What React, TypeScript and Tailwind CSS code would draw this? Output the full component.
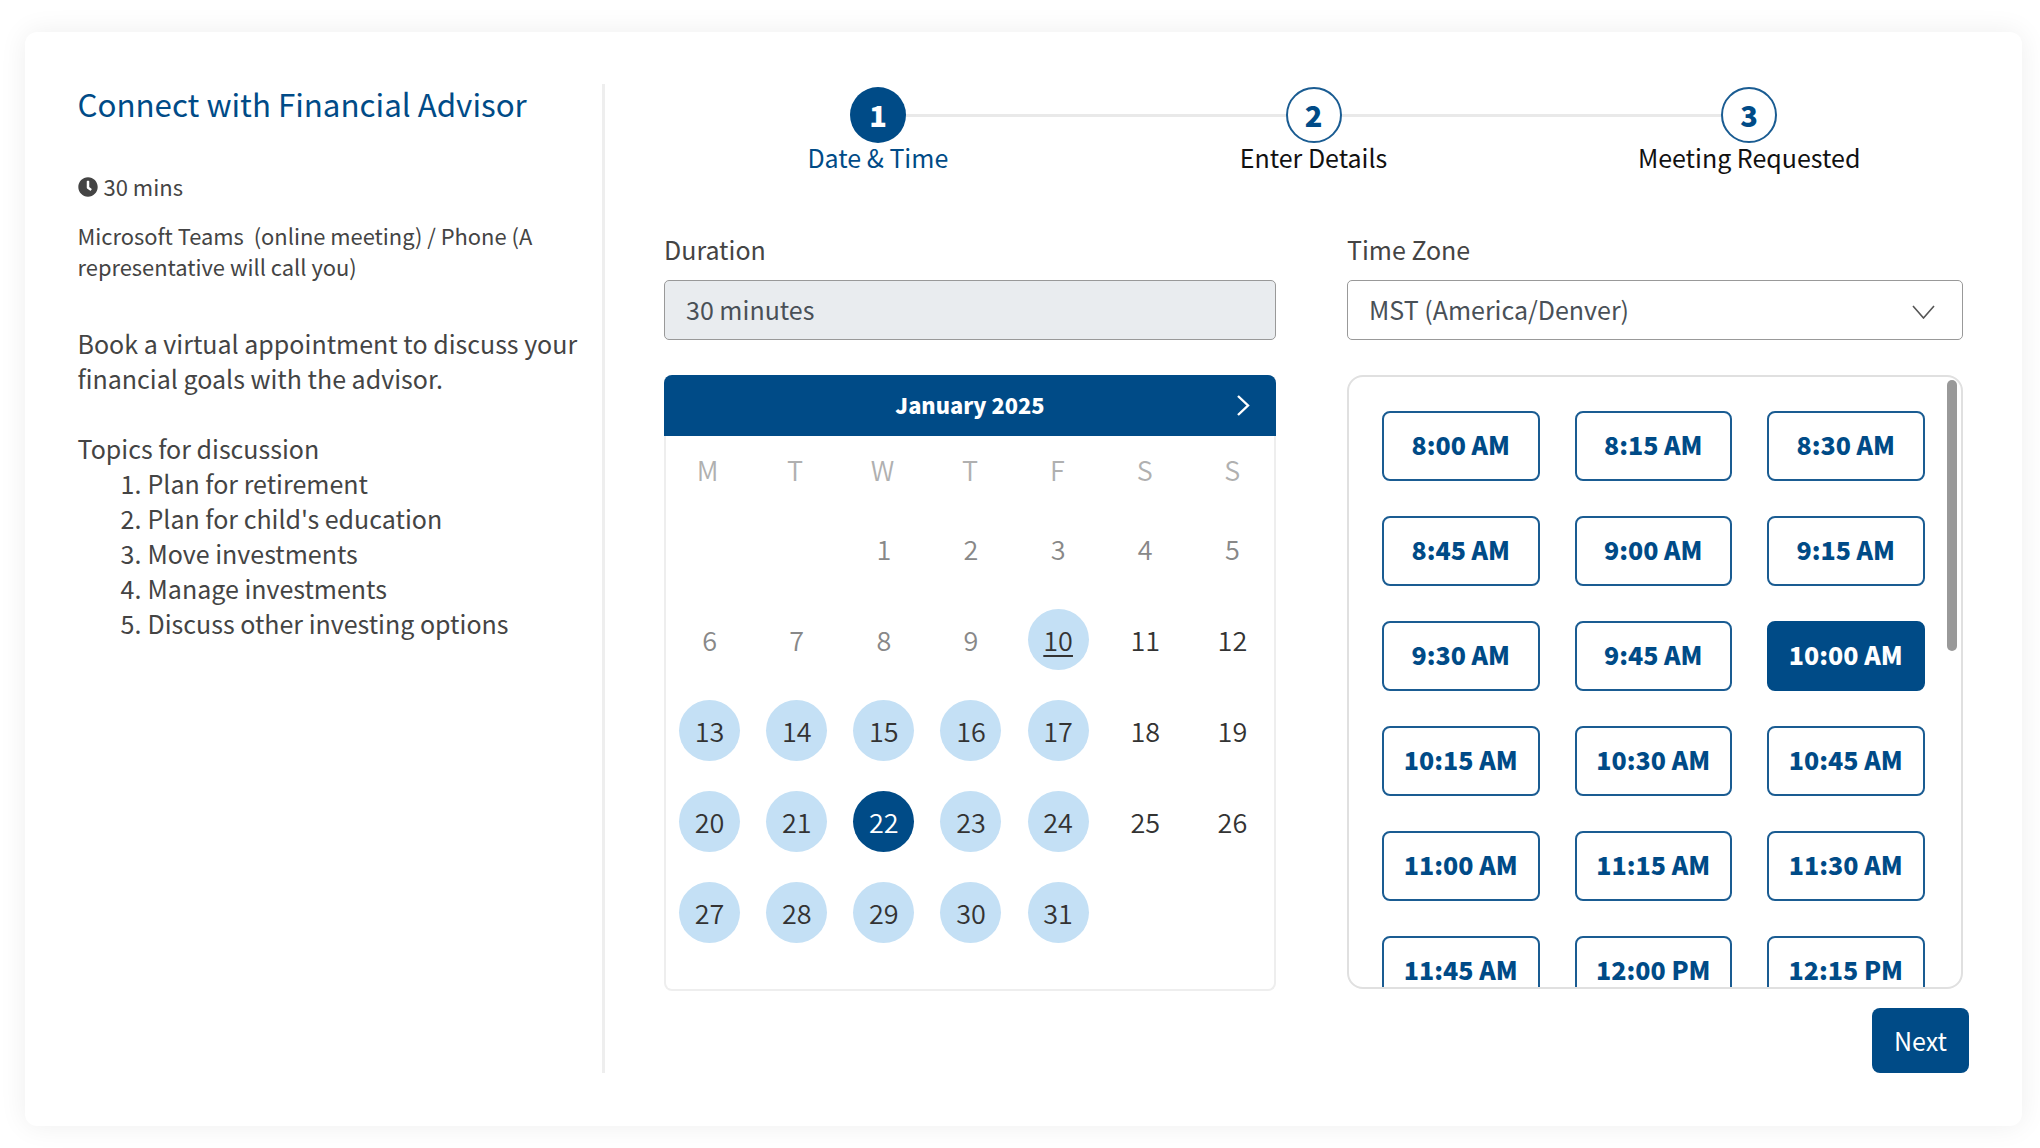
import { FaClock } from 'react-icons/fa';

const weekdays = ['M', 'T', 'W', 'T', 'F', 'S', 'S'];

const slots = [
  '8:00 AM', '8:15 AM', '8:30 AM',
  '8:45 AM', '9:00 AM', '9:15 AM',
  '9:30 AM', '9:45 AM', '10:00 AM',
  '10:15 AM', '10:30 AM', '10:45 AM',
  '11:00 AM', '11:15 AM', '11:30 AM',
  '11:45 AM', '12:00 PM', '12:15 PM',
];

const topics = [
  'Plan for retirement',
  "Plan for child's education",
  'Move investments',
  'Manage investments',
  'Discuss other investing options',
];

function Day({ day }: { day: number }) {
  if (day === 22) {
    return <div className="w-[61px] h-[61px] rounded-full bg-[#004b87] text-white flex items-center justify-center">{day}</div>;
  }
  if (day === 10) {
    return <div className="w-[61px] h-[61px] rounded-full bg-[#c4e0f5] text-[#333] underline underline-offset-4 flex items-center justify-center">{day}</div>;
  }
  if (day > 10 && day < 32 && ![11, 12, 18, 19, 25, 26].includes(day)) {
    return <div className="w-[61px] h-[61px] rounded-full bg-[#c4e0f5] text-[#333] flex items-center justify-center">{day}</div>;
  }
  return <div className={`w-[61px] h-[61px] flex items-center justify-center ${day < 10 ? 'text-[#888]' : 'text-[#333]'}`}>{day}</div>;
}

export default function App() {
  return (
    <div className="h-[1148px] bg-white pt-[32px] pl-[25px] font-['Noto_Sans_CJK_SC',sans-serif] text-[25px] leading-[35px] text-[#444]">
      <div className="w-[1997px] h-[1094px] bg-white rounded-[12px] shadow-[0_0_28px_rgba(0,0,0,0.07)] pt-[52px] flex">
        {/* left info column */}
        <div className="w-[580px] h-[989px] pl-[52.5px] border-r-[3px] border-[#eeeeee] shrink-0">
          <h1 className="text-[31.3px] leading-[42px] text-[#004b87] -translate-y-[1px]">Connect with Financial Advisor</h1>
          <div className="mt-[45px] flex items-center gap-[6px] text-[22px] leading-[31px]">
            <FaClock className="w-[20px] h-[20px] text-[#444]" />
            <span>30 mins</span>
          </div>
          <p className="mt-[18px] text-[21.9px] leading-[31px] w-[480px]">Microsoft Teams&nbsp; (online meeting) / Phone (A representative will call you)</p>
          <p className="mt-[44px] w-[510px]">Book a virtual appointment to discuss your financial goals with the advisor.</p>
          <p className="mt-[35px]">Topics for discussion</p>
          <ol className="list-none pl-[43px]">
            {topics.map((t, i) => (
              <li key={t} className="flex">
                <span className="w-[27px] shrink-0">{i + 1}.</span>
                <span>{t}</span>
              </li>
            ))}
          </ol>
        </div>

        {/* right booking column */}
        <div className="pl-[55px] pt-[3px]">
          {/* stepper */}
          <div className="w-[1307px]">
            <div className="flex items-center px-[190px] text-[29px] font-black">
              <div className="w-[56px] h-[56px] pb-[2px] rounded-full bg-[#004b87] text-white flex items-center justify-center shrink-0">1</div>
              <div className="flex-1 h-[3px] bg-[#e9e9e9]" />
              <div className="w-[56px] h-[56px] pb-[2px] rounded-full border-2 border-[#1a5c92] text-[#004b87] flex items-center justify-center shrink-0">2</div>
              <div className="flex-1 h-[3px] bg-[#e9e9e9]" />
              <div className="w-[56px] h-[56px] pb-[2px] rounded-full border-2 border-[#1a5c92] text-[#004b87] flex items-center justify-center shrink-0">3</div>
            </div>
            <div className="-mt-[3px] grid grid-cols-3 text-center text-[#111]">
              <div className="text-[#004b87]">Date &amp; Time</div>
              <div>Enter Details</div>
              <div>Meeting Requested</div>
            </div>
          </div>

          <div className="ml-[4px] mt-[57px] grid grid-cols-[612px_616px] gap-x-[71px]">
            {/* duration + calendar */}
            <div>
              <div>Duration</div>
              <div className="mt-[13px] h-[60px] bg-[#e9ecef] border border-[#999] rounded-[5px] px-[21px] pb-[2px] flex items-center text-[#495057]">30 minutes</div>
              <div className="mt-[35px] h-[616px] rounded-[8px] border-2 border-t-0 border-[#eeeeee] relative text-[27px] font-[350]">
                <div className="-mx-[2px] h-[61px] bg-[#004b87] rounded-t-[8px] text-white text-[21.8px] font-black pb-[2px] flex items-center justify-center relative">
                  January 2025
                  <svg className="absolute right-[26px] top-[20px]" width="14" height="21" viewBox="0 0 14 21" fill="none" stroke="white" strokeWidth="2.4">
                    <polyline points="2,1 12,10.5 2,20" />
                  </svg>
                </div>
                <div className="-mx-[2px] grid grid-cols-7 justify-items-center text-[#b0b0b0] mt-[16px]">
                  {weekdays.map((d, i) => <div key={i}>{d}</div>)}
                </div>
                <div className="-mx-[2px] pl-[2px] grid grid-cols-7 justify-items-center gap-y-[30px] mt-[31px]">
                  <div /><div />
                  {Array.from({ length: 31 }, (_, i) => <Day key={i} day={i + 1} />)}
                </div>
              </div>
            </div>

            {/* time zone + slots */}
            <div>
              <div>Time Zone</div>
              <div className="mt-[13px] h-[60px] border border-[#999] rounded-[5px] px-[21px] flex items-center justify-between text-[#495057]">
                <span className="pb-[2px]">MST (America/Denver)</span>
                <svg className="mr-[6px] mt-[4px]" width="23" height="14" viewBox="0 0 23 14" fill="none" stroke="#555" strokeWidth="1.6">
                  <polyline points="1,1 11.5,13 22,1" />
                </svg>
              </div>
              <div className="mt-[35px] h-[614px] border-2 border-[#e0e0e0] rounded-[16px] overflow-hidden relative pl-[33px] pt-[34px]">
                <div className="grid grid-cols-[157.5px_157.5px_157.5px] gap-x-[35px] gap-y-[35px] text-[25px] font-black text-[#004b87]">
                  {slots.map((s) => (
                    <div
                      key={s}
                      className={`h-[70px] pb-[3px] rounded-[8px] border-2 flex items-center justify-center ${s === '10:00 AM' ? 'bg-[#004b87] border-[#004b87] text-white' : 'border-[#1a5c92]'}`}
                    >
                      {s}
                    </div>
                  ))}
                </div>
                <div className="absolute right-[4px] top-[3px] w-[10px] h-[271px] rounded-full bg-[#999]" />
              </div>
            </div>
          </div>

          <div className="mt-[17px] w-[1309px] flex justify-end">
            <div className="w-[97px] h-[65px] rounded-[8px] bg-[#004b87] text-white flex items-center justify-center">Next</div>
          </div>
        </div>
      </div>
    </div>
  );
}
